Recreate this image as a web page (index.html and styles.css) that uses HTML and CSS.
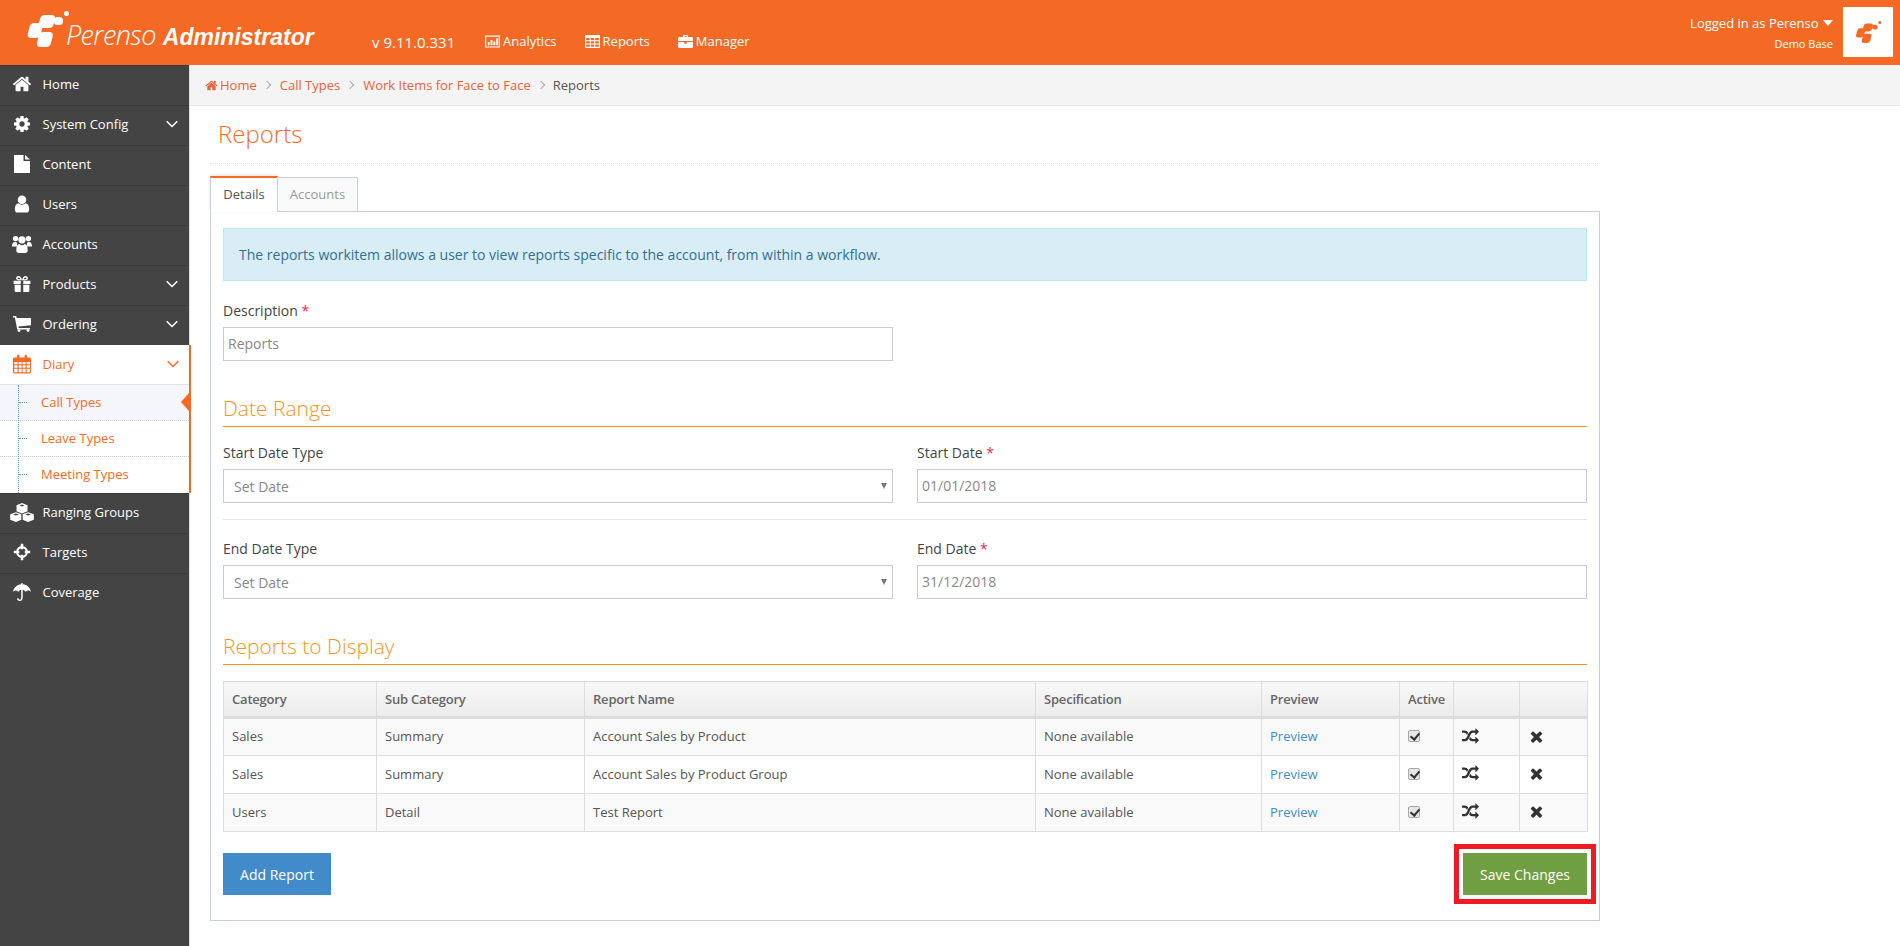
FILE: index.html
```html
<!DOCTYPE html>
<html lang="en">
<head>
<meta charset="utf-8">
<title>Reports</title>
<link rel="stylesheet" href="styles.css">
</head>
<body>
<svg class="defs" aria-hidden="true">
  <symbol id="i-home" viewBox="0 0 1792 1792"><path d="M1472 992v480q0 26-19 45t-45 19h-384v-384h-256v384h-384q-26 0-45-19t-19-45v-480q0-1 .5-3t.5-3l575-474 575 474q1 2 1 6zm223-69l-62 74q-8 9-21 11h-3q-13 0-21-7l-692-577-692 577q-12 8-24 7-13-2-21-11l-62-74q-8-10-7-23.5t11-21.5l719-599q32-26 76-26t76 26l244 204v-195q0-14 9-23t23-9h192q14 0 23 9t9 23v408l219 182q10 8 11 21.5t-7 23.5z"/></symbol>
  <symbol id="i-cog" viewBox="-60 -60 1912 1912"><path d="M1152 896q0-106-75-181t-181-75-181 75-75 181 75 181 181 75 181-75 75-181zm512-109v222q0 12-8 23t-20 13l-185 28q-19 54-39 91 35 50 107 138 10 12 10 25t-9 23q-27 37-99 108t-94 71q-12 0-26-9l-138-108q-44 23-91 38-16 136-29 186-7 28-36 28h-222q-14 0-24.5-8.5t-11.5-21.5l-28-184q-49-16-90-37l-141 107q-10 9-25 9-14 0-25-11-126-114-165-168-7-10-7-23 0-12 8-23 15-21 51-66.5t54-70.5q-27-50-41-99l-183-27q-13-2-21-12.5t-8-23.5v-222q0-12 8-23t19-13l186-28q14-46 39-92-40-57-107-138-10-12-10-24 0-10 9-23 26-36 98.5-107.5t94.5-71.5q13 0 26 10l138 107q44-23 91-38 16-136 29-186 7-28 36-28h222q14 0 24.5 8.5t11.5 21.5l28 184q49 16 90 37l142-107q9-9 24-9 13 0 25 10 129 119 165 170 7 8 7 22 0 12-8 23-15 21-51 66.5t-54 70.5q26 50 41 98l183 28q13 2 21 12.5t8 23.5z"/></symbol>
  <symbol id="i-file" viewBox="-2 -1 20 20"><path d="M0 0h9.5v6H16v12H0zM11 0l5 4.6H11z"/></symbol>
  <symbol id="i-user" viewBox="0 0 1792 1792"><path d="M1536 1399q0 109-62.5 187t-150.5 78h-854q-88 0-150.5-78t-62.5-187q0-85 8.5-160.5t31.5-152 58.5-131 94-89 134.5-34.5q131 128 313 128t313-128q76 0 134.5 34.5t94 89 58.5 131 31.5 152 8.5 160.5zm-256-887q0 159-112.5 271.5t-271.5 112.5-271.5-112.5-112.5-271.5 112.5-271.5 271.5-112.5 271.5 112.5 112.5 271.5z"/></symbol>
  <symbol id="i-group" viewBox="0 -1 20 20"><circle cx="3.600" cy="3.600" r="2.700"/><circle cx="16.400" cy="3.600" r="2.700"/><circle cx="10" cy="4.800" r="3.600"/><path d="M0 11.500C0 8.500 1 7 3 7c.8 0 1.400.6 2.200.8-.4 1.200-.2 2.600.4 3.700H1.200zM20 11.500c0-3-1-4.500-3-4.500-.8 0-1.400.6-2.200.8.4 1.200.2 2.600-.4 3.700h4.400z"/><path d="M4.300 15.200c0-4 1.200-6.200 3-6.200 1 .9 1.700 1.300 2.700 1.300s1.700-.4 2.700-1.300c1.800 0 3 2.200 3 6.200 0 1.800-1 2.800-2.500 2.800H6.800c-1.500 0-2.500-1-2.500-2.800z"/></symbol>
  <symbol id="i-gift" viewBox="-1.500 -2 19 19"><path fill-rule="evenodd" d="M0 4.500h6.800v3H0zM9.200 4.500H16v3H9.200zM1 8.300h5.800V15H2c-.6 0-1-.4-1-1zM9.200 8.300H15V14c0 .6-.4 1-1 1H9.200zM4.600 0C3.200 0 2.400 1 2.400 2.100S3.200 4 4.600 4H8C7.500 1.800 6.400 0 4.600 0zm.1 1.300c.8 0 1.300.9 1.600 1.600H4.700c-.5 0-.9-.3-.9-.8s.4-.8.900-.8zM11.400 0c1.400 0 2.200 1 2.200 2.100S12.800 4 11.400 4H8C8.500 1.800 9.600 0 11.400 0zm-.1 1.300c-.8 0-1.300.9-1.600 1.600h1.600c.5 0 .9-.3.900-.8s-.4-.8-.9-.8z"/></symbol>
  <symbol id="i-cart" viewBox="-0.500 -2 19 20"><path d="M0 0h3.200l.5 2H18v7.200L5.400 10.600l.3 1.400H17v1.500H4.200L1.900 1.500H0z"/><circle cx="6" cy="14.600" r="1.400"/><circle cx="15" cy="14.600" r="1.400"/></symbol>
  <symbol id="i-cal" viewBox="-1 -0.500 20 20"><path fill-rule="evenodd" d="M1.500 3H4V1.500C4 .7 4.500.2 5.200.2S6.400.7 6.400 1.500V3h5.200V1.500c0-.8.5-1.300 1.200-1.300s1.200.5 1.200 1.300V3h2.500c.8 0 1.500.7 1.500 1.500v13c0 .8-.7 1.500-1.500 1.500h-15C.7 19 0 18.300 0 17.500v-13C0 3.700.7 3 1.500 3zM1.300 7.500v2.300h3.200V7.500zm4.300 0v2.300h3V7.500zm4 0v2.300h3V7.500zm4.100 0v2.300H17V7.500zM1.300 10.800v2.500h3.200v-2.500zm4.300 0v2.500h3v-2.500zm4 0v2.500h3v-2.500zm4.100 0v2.500H17v-2.500zM1.300 14.300v3.400h3.200v-3.400zm4.300 0v3.400h3v-3.400zm4 0v3.400h3v-3.400zm4.100 0v3.400H17v-3.400z"/></symbol>
  <symbol id="i-cubes" viewBox="0 0 24 19"><path fill-rule="evenodd" d="M12 0l5.500 2.200v6l-5.500 2.200-5.500-2.200v-6zM9.500 2.400L12 3.400l2.500-1L12 1.400zM6 9.200l5.300 2.100v5.500L6 19 .2 16.800v-5.500zM3 11.500l3 1.100 2.800-1.100L6 10.500zM18 9.200l5.800 2.100v5.500L18 19l-5.300-2.200v-5.500zM15.200 11.500l2.800 1.100 3-1.100-3-1z"/></symbol>
  <symbol id="i-target" viewBox="-2 -2 22 22"><path fill-rule="evenodd" d="M9 2.500a6.500 6.500 0 1 1 0 13 6.500 6.500 0 0 1 0-13zm0 2.300a4.200 4.200 0 1 0 0 8.400 4.200 4.200 0 0 0 0-8.400z"/><path d="M7.600 0h2.800v6H7.600zM7.600 12h2.800v6H7.600zM0 7.600h6v2.800H0zM12 7.600h6v2.800h-6z"/></symbol>
  <symbol id="i-umbrella" viewBox="-1 -1 20 20"><path d="M9.700 0v1.300C14.200 1.700 17.300 4.700 18 9c-1.600-2-4-2-5.200 0-.9-1.300-2-1.900-3.100-1.900v7.600c0 2-1.200 3.300-2.900 3.300S4 16.700 3.900 15.200h1.500c.1.900.5 1.400 1.400 1.400.9 0 1.400-.6 1.400-1.900V7.100C7.100 7.100 6 7.700 5.200 9 4 7 1.600 7 0 9c.7-4.300 3.800-7.300 8.300-7.700V0z"/></symbol>
  <symbol id="i-chart" viewBox="0 0 16 13"><path fill-rule="evenodd" d="M0 0h16v13H0zm1.300 1.300v10.400h13.400V1.300z"/><path d="M3 7h2v3.500H3zM6 5h2v5.500H6zM9 6.500h2v4H9zM12 3h2v7.500h-2z"/></symbol>
  <symbol id="i-table" viewBox="0 0 15 13"><path fill-rule="evenodd" d="M1 0h13c.6 0 1 .4 1 1v11c0 .6-.4 1-1 1H1c-.6 0-1-.4-1-1V1c0-.6.4-1 1-1zm.2 3v2.200h3.600V3zm4.600 0v2.200h3.400V3zm4.400 0v2.200h3.600V3zM1.200 6.200v2.300h3.600V6.200zm4.600 0v2.300h3.400V6.200zm4.400 0v2.300h3.600V6.200zM1.200 9.500v2.300h3.600V9.500zm4.600 0v2.300h3.400V9.500zm4.400 0v2.300h3.600V9.500z"/></symbol>
  <symbol id="i-case" viewBox="0 0 15 13"><path d="M5 2V1c0-.6.4-1 1-1h3c.6 0 1 .4 1 1v1h3.500c.8 0 1.500.7 1.500 1.500V6H0V3.500C0 2.700.7 2 1.500 2zm1.200 0h2.600V1.200H6.200zM0 7h6v1.500h3V7h6v4.500c0 .8-.7 1.500-1.500 1.500h-12C.7 13 0 12.300 0 11.500z"/></symbol>
  <symbol id="i-chev" viewBox="0 0 12 8"><path d="M.7 1.200L6 6.500l5.300-5.300" fill="none" stroke="currentColor" stroke-width="1.500"/></symbol>
  <symbol id="i-times" viewBox="0 0 1792 1792"><path d="M1490 1322q0 40-28 68l-136 136q-28 28-68 28t-68-28l-294-294-294 294q-28 28-68 28t-68-28l-136-136q-28-28-28-68t28-68l294-294-294-294q-28-28-28-68t28-68l136-136q28-28 68-28t68 28l294 294 294-294q28-28 68-28t68 28l136 136q28 28 28 68t-28 68l-294 294 294 294q28 28 28 68z"/></symbol>
  <symbol id="i-shuffle" viewBox="0 0 1792 1792"><path d="M666 481q-60 92-137 273-22-45-37-72.500t-40.500-63.500-51-56.500-63-35-81.500-14.500h-224q-14 0-23-9t-9-23v-192q0-14 9-23t23-9h224q250 0 410 225zm1126 799q0 14-9 23l-320 320q-9 9-23 9-13 0-22.500-9.500t-9.500-22.500v-192q-32 0-85 .5t-81 1-73-1-71-5-64-10.500-63-18.500-58-28.500-59-40-55-53.500-56-69.500q59-93 136-273 22 45 37 72.500t40.500 63.500 51 56.500 63 35 81.500 14.500h256v-192q0-14 9-23t23-9q12 0 24 10l319 319q9 9 9 23zm0-896q0 14-9 23l-320 320q-9 9-23 9-13 0-22.500-9.500t-9.500-22.500v-192h-256q-48 0-87 15t-69 45-51 61.500-45 77.500q-32 62-78 171-29 66-49.500 111t-54 105-64 100-74 83-90 68.500-106.500 42-128 16.500h-224q-14 0-23-9t-9-23v-192q0-14 9-23t23-9h224q48 0 87-15t69-45 51-61.500 45-77.500q32-62 78-171 29-66 49.500-111t54-105 64-100 74-83 90-68.500 106.500-42 128-16.500h256v-192q0-14 9-23t23-9q12 0 24 10l319 319q9 9 9 23z"/></symbol>
  <symbol id="i-logo" viewBox="0 0 44 36"><rect x="2.500" y="12" width="13" height="15" rx="4" transform="matrix(1 0 -.25 1 5 0)"/><rect x="13" y="4" width="15" height="13" rx="4" transform="matrix(1 0 -.25 1 3 0)"/><rect x="14" y="21" width="14" height="15" rx="4" transform="matrix(1 0 -.25 1 5 0)"/><rect x="28" y="6" width="9" height="8" rx="3.500"/><circle cx="40.500" cy="2.500" r="2.500"/></symbol>
</svg>

<header class="topbar">
  <div class="brand">
    <svg class="brand-mark"><use href="#i-logo"/></svg>
    <span class="brand-name">Perenso</span>
    <span class="brand-app">Administrator</span>
  </div>
  <span class="version">v 9.11.0.331</span>
  <nav class="topnav">
    <a><svg class="tn-icon"><use href="#i-chart"/></svg>Analytics</a>
    <a><svg class="tn-icon"><use href="#i-table"/></svg>Reports</a>
    <a><svg class="tn-icon"><use href="#i-case"/></svg>Manager</a>
  </nav>
  <div class="account">
    <div class="account-text">
      <div class="account-user">Logged in as Perenso <span class="caret"></span></div>
      <div class="account-base">Demo Base</div>
    </div>
    <div class="account-logo"><svg class="account-mark"><use href="#i-logo"/></svg></div>
  </div>
</header>

<div class="shell">
  <aside class="sidebar">
    <a class="side-item"><svg class="side-icon"><use href="#i-home"/></svg>Home</a>
    <a class="side-item"><svg class="side-icon"><use href="#i-cog"/></svg>System Config<svg class="chev"><use href="#i-chev"/></svg></a>
    <a class="side-item"><svg class="side-icon"><use href="#i-file"/></svg>Content</a>
    <a class="side-item"><svg class="side-icon"><use href="#i-user"/></svg>Users</a>
    <a class="side-item"><svg class="side-icon"><use href="#i-group"/></svg>Accounts</a>
    <a class="side-item"><svg class="side-icon"><use href="#i-gift"/></svg>Products<svg class="chev"><use href="#i-chev"/></svg></a>
    <a class="side-item"><svg class="side-icon"><use href="#i-cart"/></svg>Ordering<svg class="chev"><use href="#i-chev"/></svg></a>
    <div class="side-open">
      <a class="side-item active"><svg class="side-icon"><use href="#i-cal"/></svg>Diary<svg class="chev"><use href="#i-chev"/></svg></a>
      <div class="submenu">
        <a class="sub-item current">Call Types</a>
        <a class="sub-item">Leave Types</a>
        <a class="sub-item">Meeting Types</a>
      </div>
    </div>
    <a class="side-item"><svg class="side-icon wide"><use href="#i-cubes"/></svg>Ranging Groups</a>
    <a class="side-item"><svg class="side-icon"><use href="#i-target"/></svg>Targets</a>
    <a class="side-item"><svg class="side-icon"><use href="#i-umbrella"/></svg>Coverage</a>
  </aside>

  <main class="main">
    <div class="crumbs">
      <a class="crumb"><svg class="crumb-home"><use href="#i-home"/></svg>Home</a>
      <span class="crumb-sep"></span>
      <a class="crumb">Call Types</a>
      <span class="crumb-sep"></span>
      <a class="crumb">Work Items for Face to Face</a>
      <span class="crumb-sep last"></span>
      <span class="crumb-now">Reports</span>
    </div>
    <div class="page">
      <h1 class="page-title">Reports</h1>
      <div class="tabs">
        <a class="tab on">Details</a>
        <a class="tab">Accounts</a>
      </div>
      <section class="panel">
        <div class="alert">The reports workitem allows a user to view reports specific to the account, from within a workflow.</div>

        <div class="grid two desc-row">
          <div class="field">
            <label class="label">Description <span class="req">*</span></label>
            <input class="control" value="Reports">
          </div>
        </div>

        <h2 class="section">Date Range</h2>
        <div class="grid two">
          <div class="field">
            <label class="label">Start Date Type</label>
            <div class="select-wrap"><select class="control select"><option>Set Date</option></select></div>
          </div>
          <div class="field">
            <label class="label">Start Date <span class="req">*</span></label>
            <input class="control" value="01/01/2018">
          </div>
        </div>
        <hr class="rule">
        <div class="grid two">
          <div class="field">
            <label class="label">End Date Type</label>
            <div class="select-wrap"><select class="control select"><option>Set Date</option></select></div>
          </div>
          <div class="field">
            <label class="label">End Date <span class="req">*</span></label>
            <input class="control" value="31/12/2018">
          </div>
        </div>

        <h2 class="section reports">Reports to Display</h2>
        <table class="table">
          <colgroup>
            <col class="c1"><col class="c2"><col class="c3"><col class="c4"><col class="c5"><col class="c6"><col class="c7"><col class="c8">
          </colgroup>
          <thead>
            <tr><th>Category</th><th>Sub Category</th><th>Report Name</th><th>Specification</th><th>Preview</th><th>Active</th><th></th><th></th></tr>
          </thead>
          <tbody>
            <tr><td>Sales</td><td>Summary</td><td>Account Sales by Product</td><td>None available</td><td><a class="link">Preview</a></td><td><input class="check" type="checkbox" checked disabled></td><td><svg class="act shuffle"><use href="#i-shuffle"/></svg></td><td><svg class="act"><use href="#i-times"/></svg></td></tr>
            <tr><td>Sales</td><td>Summary</td><td>Account Sales by Product Group</td><td>None available</td><td><a class="link">Preview</a></td><td><input class="check" type="checkbox" checked disabled></td><td><svg class="act shuffle"><use href="#i-shuffle"/></svg></td><td><svg class="act"><use href="#i-times"/></svg></td></tr>
            <tr><td>Users</td><td>Detail</td><td>Test Report</td><td>None available</td><td><a class="link">Preview</a></td><td><input class="check" type="checkbox" checked disabled></td><td><svg class="act shuffle"><use href="#i-shuffle"/></svg></td><td><svg class="act"><use href="#i-times"/></svg></td></tr>
          </tbody>
        </table>

        <div class="actions">
          <button class="btn btn-blue">Add Report</button>
          <button class="btn btn-green">Save Changes</button>
        </div>
      </section>
    </div>
  </main>
</div>
</body>
</html>
```

FILE: styles.css
```css
* { box-sizing: border-box; }
html, body { height: 100%; }
body {
  margin: 0;
  font-family: "Open Sans", "Liberation Sans", sans-serif;
  font-size: 13px;
  color: #555;
  background: #fff;
  overflow: hidden;
}
.defs { display: none; }

.topbar {
  height: 65px;
  background: #f46a25;
  color: #fff;
  display: flex;
  align-items: flex-start;
}
.brand {
  width: 372px;
  height: 65px;
  flex: none;
  display: flex;
  align-items: baseline;
  padding: 23px 0 0 26px;
  white-space: nowrap;
  font-style: italic;
  color: #fff;
}
.brand-mark { width: 44px; height: 36px; fill: #fff; flex: none; align-self: flex-start; margin: -12px -4px 0 0; }
.brand-name { font-family: "Open Sans", sans-serif; font-size: 27px; line-height: 24px; letter-spacing: -0.6px; font-weight: 300; }
.brand-app { font-family: "Liberation Sans", Arial, sans-serif; font-size: 23px; line-height: 24px; font-weight: 700; margin-left: 7px; }
.version { font-size: 15px; line-height: 20px; margin-top: 32px; width: 113px; flex: none; }
.topnav { display: flex; gap: 28px; margin-top: 31px; }
.topnav a { display: flex; align-items: center; gap: 3px; font-size: 13px; line-height: 20px; color: #fff; }
.tn-icon { width: 15px; height: 13px; fill: #fff; }
.account { margin-left: auto; display: flex; padding: 7px 7px 0 0; }
.account-text { text-align: right; padding-right: 10px; }
.account-user { font-size: 13px; line-height: 18px; margin-top: 7px; }
.account-base { font-size: 11px; line-height: 16px; margin-top: 4px; font-weight: 400; }
.caret { display: inline-block; width: 0; height: 0; border: 5px solid transparent; border-top: 6px solid #fff; border-bottom: 0; vertical-align: 2px; margin-left: 1px; }
.account-logo { width: 50px; height: 50px; background: #fff; display: flex; align-items: center; justify-content: center; }
.account-mark { width: 27px; height: 22px; fill: #f46a25; }

.shell { display: flex; height: 881px; }
.sidebar { width: 190px; flex: none; background: #444; border-right: 1px solid #ddd; }
.side-item {
  height: 40px;
  display: flex;
  align-items: center;
  color: #fff;
  font-size: 13px;
  border-top: 1px solid #3a3a3a;
  padding-bottom: 3px;
  padding-left: 12px;
}
.side-icon { width: 20px; height: 20px; fill: #fff; margin-right: 10.500px; flex: none; }
.side-icon.wide { width: 24px; height: 19px; margin-left: -2px; margin-right: 8.500px; }
.chev { width: 12px; height: 8px; margin-left: auto; margin-right: 11px; color: #fff; flex: none; }
.side-open { background: #fff; width: 191px; border-right: 2px solid #f46a25; position: relative; z-index: 1; }
.side-item.active { color: #f46a25; border-top: 0; border-bottom: 1px solid #e2e2e2; padding-bottom: 1px; }
.side-item.active .side-icon { fill: #f46a25; }
.side-item.active .chev { color: #f46a25; margin-right: 10px; }
.submenu { position: relative; }
.submenu::before { content: ""; position: absolute; z-index: 1; left: 18px; top: 0; bottom: 0; border-left: 1px dotted #5b9bd1; }
.sub-item {
  height: 36px;
  display: flex;
  align-items: center;
  padding-left: 41px;
  padding-bottom: 2px;
  color: #f46a25;
  font-size: 13px;
  border-bottom: 1px dotted #ccc;
  position: relative;
}
.sub-item:last-child { border-bottom: 0; }
.sub-item::before { content: ""; position: absolute; left: 19px; top: 17px; width: 8px; border-top: 1px dotted #5b9bd1; }
.sub-item.current { background: #f4f6fb; }
.sub-item.current::after {
  content: "";
  position: absolute;
  right: 0;
  top: 8px;
  border: 9px solid transparent;
  border-left: 0;
  border-right: 8px solid #f46a25;
}

.main { flex: 1; min-width: 0; }
.crumbs {
  height: 41px;
  background: #f4f4f4;
  border-bottom: 1px solid #e7e7e7;
  display: flex;
  align-items: center;
  padding: 0 0 0 15px;
  font-size: 13px;
}
.crumb { color: #e9613a; display: flex; align-items: center; }
.crumb-home { width: 13px; height: 13px; fill: #e9613a; margin-right: 2px; }
.crumb-now { color: #555; }
.crumb-sep { width: 6px; height: 6px; border-top: 1px solid #aaa; border-right: 1px solid #aaa; transform: rotate(45deg); margin: 0 10px 0 7px; }
.crumb-sep.last { margin-right: 9px; }

.page { width: 1410px; padding: 0 0 0 20px; }
.page-title {
  margin: 0;
  height: 58px;
  padding: 11px 0 0 8px;
  font-size: 24px;
  line-height: 34px;
  font-weight: 300;
  color: #f46a25;
  border-bottom: 1px dotted #e0e0e0;
}
.tabs { display: flex; margin-top: 12px; height: 36px; align-items: flex-end; position: relative; z-index: 1; }
.tab {
  height: 35px;
  width: 81px;
  margin-left: -1px;
  display: flex;
  align-items: center;
  justify-content: center;
  padding-bottom: 2px;
  background: #f9f9f9;
  border: 1px solid #c5d0dc;
  color: #999;
  font-size: 13px;
}
.tab.on {
  width: 68px;
  margin-left: 0;
  height: 36px;
  background: #fff;
  border: 1px solid #c5d0dc;
  border-top: 2px solid #f46a25;
  border-bottom: 1px solid #fff;
  color: #555;
  box-shadow: 0 -1px 3px rgba(0,0,0,.12);
}
.panel { height: 710px; border: 1px solid #c5d0dc; margin-top: -1px; padding: 16px 12px 0 12px; }
.alert {
  height: 53px;
  background: #d9edf7;
  border: 1px solid #bce8f1;
  color: #31708f;
  font-size: 14px;
  line-height: 18px;
  padding: 17px 15px;
}
.grid.two { display: grid; grid-template-columns: 670px 670px; column-gap: 24px; }
.desc-row { margin-top: 20px; }
.label { display: block; font-size: 14px; line-height: 20px; color: #444; margin-bottom: 6px; }
.req { color: #ed2a4e; }
.control {
  display: block;
  width: 100%;
  height: 34px;
  border: 1px solid #ccc;
  background: #fff;
  border-radius: 0;
  font: 14px "Open Sans", sans-serif;
  color: #888;
  padding: 0 4px 1px;
  outline: none;
}
.select-wrap { position: relative; }
.select-wrap::after { content: ""; position: absolute; right: 6px; top: 14px; border: 3px solid transparent; border-top: 6px solid #777; border-bottom: 0; }
.select { appearance: none; padding: 0 10px; }
.section {
  margin: 34px 0 16px;
  height: 32px;
  font-size: 21px;
  line-height: 27px;
  font-weight: 300;
  color: #f7941d;
  border-bottom: 1px solid #f7941d;
}
.section.reports { margin: 33px 0 16px; height: 33px; line-height: 28px; }
.rule { border: 0; border-top: 1px solid #e5e5e5; margin: 16px 0 19px; }
.table { width: 1364px; table-layout: fixed; border-collapse: collapse; font-size: 13px; }
.c1 { width: 153px; } .c2 { width: 208px; } .c3 { width: 451px; } .c4 { width: 226px; }
.c5 { width: 138px; } .c6 { width: 54px; } .c7 { width: 66px; } .c8 { width: 68px; }
.table th {
  height: 36px;
  text-align: left;
  padding: 0 8px;
  font-weight: 600;
  letter-spacing: -0.2px;
  color: #666;
  background: linear-gradient(#f8f8f8, #ececec);
  border: 1px solid #ddd;
  border-bottom: 3px solid #ddd;
}
.table td { height: 38px; padding: 0 8px 2px; border: 1px solid #ddd; color: #555; }
.table tbody tr:nth-child(odd) td { background: #f9f9f9; }
.link { color: #428bca; }
.check {
  appearance: none;
  margin: 0;
  display: block;
  position: relative;
  width: 12px;
  height: 12px;
  background: #e6e6e6;
  border: 1px solid #a8a8a8;
  border-radius: 2px;
}
.check::after {
  content: "";
  position: absolute;
  left: 3px;
  top: 0;
  width: 4px;
  height: 7px;
  border: solid #333;
  border-width: 0 2px 2px 0;
  transform: rotate(40deg);
}
.act { display: block; width: 17px; height: 17px; fill: #333; }
.actions { display: flex; justify-content: space-between; margin-top: 21px; }
.btn { height: 42px; border: 0; font: 14px "Open Sans", sans-serif; color: #fff; }
.btn-blue { width: 108px; background: #428bca; }
.btn-green { width: 124px; background: #6f9e43; outline: 5px solid #ed1c24; outline-offset: 4px; }
```
